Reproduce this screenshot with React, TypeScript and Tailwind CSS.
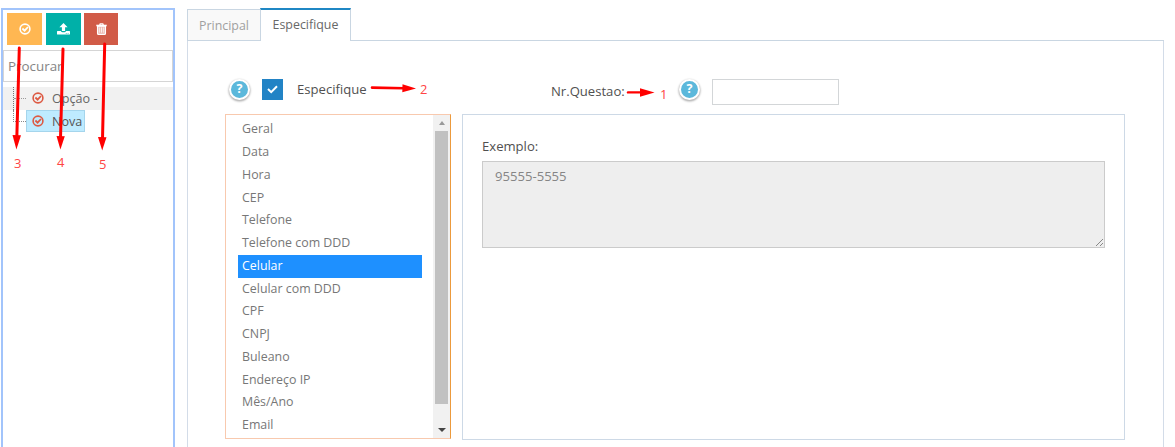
import React from 'react';

function CheckCircle({ size, className }: { size: number; className?: string }) {
  return (
    <svg width={size} height={size} viewBox="0 0 12 12" fill="none" stroke="currentColor" className={className}>
      <circle cx="6" cy="6" r="4.9" strokeWidth="1.6" />
      <path d="M3.4 5.5 L5.6 7.7 L9 4" strokeWidth="1.8" />
    </svg>
  );
}

function UploadIcon() {
  return (
    <svg width="13" height="12" viewBox="0 0 13 12" fill="currentColor">
      <path d="M6.5 0 L10.6 4.3 H8.1 V8 H4.9 V4.3 H2.4 Z" />
      <path fillRule="evenodd" d="M0.6 8 H4 C4.2 8.8 4.8 9.2 5.4 9.2 H7.6 C8.2 9.2 8.8 8.8 9 8 H12.4 Q13 8 13 8.6 V11 Q13 11.6 12.4 11.6 H0.6 Q0 11.6 0 11 V8.6 Q0 8 0.6 8 Z M8.8 10 V10.8 H9.6 V10 Z M10.7 10 V10.8 H11.5 V10 Z" />
    </svg>
  );
}

function TrashIcon() {
  return (
    <svg width="11" height="12" viewBox="0 0 11 12" fill="none" stroke="currentColor">
      <path d="M0.3 2.5 H10.7" strokeWidth="1.6" />
      <path d="M3.7 2.2 L4.2 0.9 H6.8 L7.3 2.2" strokeWidth="1.3" />
      <path d="M1.6 3 H9.4 V10.4 Q9.4 11.3 8.5 11.3 H2.5 Q1.6 11.3 1.6 10.4 Z" fill="currentColor" fillOpacity="0.55" strokeWidth="1.3" />
      <path d="M3.7 4.4 V9.7 M5.5 4.4 V9.7 M7.3 4.4 V9.7" strokeWidth="0.8" />
    </svg>
  );
}

function Help() {
  return (
    <span className="flex h-[21px] w-[21px] shrink-0 items-center justify-center rounded-full border-2 border-white bg-[#5bb8db] text-[12.5px] font-bold leading-none text-white shadow-[0_1px_2px_0.5px_rgba(0,0,0,0.3)]">
      ?
    </span>
  );
}

const options = [
  'Geral', 'Data', 'Hora', 'CEP', 'Telefone', 'Telefone com DDD', 'Celular', 'Celular com DDD',
  'CPF', 'CNPJ', 'Buleano', 'Endereço IP', 'Mês/Ano', 'Email',
];

function Sidebar() {
  return (
    <aside className="mt-2 ml-px h-[445px] w-[174px] shrink-0 border-2 border-[#a2c4fb]">
      <div className="flex pt-[3px] pl-1 text-white">
        <button className="mr-1 flex h-8 w-[35px] items-center justify-center bg-[#ffb752]"><CheckCircle size={12} /></button>
        <button className="mr-[3px] flex h-8 w-[35px] items-center justify-center bg-[#00b0a8]"><UploadIcon /></button>
        <button className="flex h-8 w-[34px] items-center justify-center bg-[#d15b47]"><TrashIcon /></button>
      </div>
      <div className="mt-[5px] flex h-8 items-center border border-[#d5d5d5] pl-1 text-[13.4px] text-[#858585]">
        <span>Procurar</span>
      </div>
      <div className="mt-[5px] flex h-[23px] items-center bg-[#f1f1f1]">
        <div className="ml-2.5 flex h-full w-[13px] flex-col border-l border-dotted border-[#777]">
          <div className="mt-[11px] border-t border-dotted border-[#999]" />
        </div>
        <div className="flex items-center pl-[6px] text-[#dd5a43]">
          <CheckCircle size={12} />
          <span className="ml-2 translate-y-px text-[12.6px] text-[#666]">Opção -</span>
        </div>
      </div>
      <div className="flex h-[22px]">
        <div className="ml-2.5 h-[12px] w-[13px] border-b border-l border-dotted border-[#888]" />
        <div className="flex h-[22px] w-[59px] items-center border border-[#a5d5ec] bg-[#beebff] pl-[5px] text-[#dd5a43]">
          <CheckCircle size={12} />
          <span className="ml-2 translate-y-px text-[12.6px] text-[#555]">Nova</span>
        </div>
      </div>
    </aside>
  );
}

function OptionList() {
  return (
    <div className="flex h-[325px] w-[226px] border border-[#f8c9ae] border-r-[#ec9a3c] bg-white">
      <div className="flex-1 pt-[3.25px] pr-[11px] pl-[12px]">
        {options.map((o) => (
          <div
            key={o}
            className={o === 'Celular'
              ? 'flex h-[22.75px] items-center bg-[#1e90ff] pl-[4px] text-[12.4px] text-white'
              : 'flex h-[22.75px] items-center pl-[4px] text-[12.4px] text-[#777]'}
          >
            {o}
          </div>
        ))}
      </div>
      <div className="flex w-[17px] flex-col items-center bg-[#f1f1f1]">
        <div className="flex h-4 items-center"><div className="border-x-[3.5px] border-b-4 border-x-transparent border-b-[#999]" /></div>
        <div className="h-[273px] w-[13px] bg-[#c1c1c1]" />
        <div className="mt-[24px] border-x-4 border-t-4 border-x-transparent border-t-[#444]" />
      </div>
    </div>
  );
}

function Main() {
  return (
    <main className="mt-2 ml-3 w-[977px] shrink-0">
      <div className="flex h-[33px]">
        <div className="mt-px flex h-8 w-[74px] items-center justify-center border border-[#c9d6e2] bg-[#f9f9f9] text-[12.4px] text-[#a0a0a0]"><span className="translate-y-px">Principal</span></div>
        <div className="-ml-px flex h-[33px] w-[91px] items-center justify-center border-x border-t-2 border-x-[#c9d6e2] border-t-[#1f87c4] text-[12.4px] text-[#686868]">Especifique</div>
        <div className="flex-1 border-b border-[#c9d6e2]" />
      </div>
      <div className="h-[450px] border-x border-[#d3dce8] pl-[37px]">
        <div className="flex h-[73px] items-center pt-[24px]">
          <div className="ml-1 w-[22px]"><Help /></div>
          <div className="ml-[11px] flex h-[21px] w-[21px] items-center justify-center bg-[#2283c5]">
            <svg width="11" height="9" viewBox="0 0 11 9" fill="none" stroke="white" strokeWidth="2"><path d="M1 4 L4.2 7.1 L10 1.2" /></svg>
          </div>
          <span className="ml-[14px] w-[254px] text-[13.1px] text-[#505050]">Especifique</span>
          <span className="w-[128px] translate-y-[2px] text-[13.1px] text-[#505050]">Nr.Questao:</span>
          <div className="w-[22px]"><Help /></div>
          <div className="ml-[11px] h-[26px] w-[127px] translate-y-[2px] border border-[#d3d6d8]" />
        </div>
        <div className="flex">
          <OptionList />
          <section className="ml-[11px] h-[326px] w-[663px] border border-[#cdd9e6] pt-[22px] pl-[19px]">
            <div className="h-[24px] text-[13.1px] leading-[18px] text-[#505050]">Exemplo:</div>
            <div className="flex h-[87px] w-[623px] items-end justify-between border border-[#cbcbcb] bg-[#eee]">
              <span className="self-start pt-[5px] pl-3 text-[13.1px] leading-[18px] text-[#858585]">95555-5555</span>
              <svg width="9" height="9" viewBox="0 0 9 9" stroke="#888" strokeWidth="1"><path d="M1 8 L8 1 M5 8 L8 5" /></svg>
            </div>
          </section>
        </div>
      </div>
    </main>
  );
}

function Annotations() {
  return (
    <div className="pointer-events-none absolute inset-0 text-[13px] leading-4 text-[#ff4545]">
      <svg width="1175" height="447" className="absolute inset-0" fill="#ff0000" stroke="#ff0000">
        <g strokeWidth="3" strokeLinecap="round">
          <path d="M19.3 48 L16.8 138" />
          <path d="M63 49 L60.5 138" />
          <path d="M104.7 44 L102.5 139" />
          <path d="M372 87.6 L404 88.3" strokeWidth="2.6" />
          <path d="M628 92.4 L642 92.4" strokeWidth="2.4" />
        </g>
        <g stroke="none">
          <path d="M12.5 135 L21 135.3 L16.4 149.5 Z" />
          <path d="M56.5 136 L64.8 136.2 L60.4 149.5 Z" />
          <path d="M98 137 L106.5 137.2 L102.2 150.5 Z" />
          <path d="M402.5 84.3 L416 88.6 L402.3 92.2 Z" />
          <path d="M640 88.3 L654.5 92.5 L640 96.7 Z" />
        </g>
      </svg>
      <span className="absolute top-[155px] left-[14px]">3</span>
      <span className="absolute top-[154px] left-[57px]">4</span>
      <span className="absolute top-[156px] left-[99px]">5</span>
      <span className="absolute top-[81px] left-[420px]">2</span>
      <span className="absolute top-[86px] left-[660px]">1</span>
    </div>
  );
}

export default function App() {
  return (
    <div className="relative flex h-[447px] w-[1175px] overflow-hidden bg-white font-['Open_Sans',sans-serif]">
      <Sidebar />
      <Main />
      <Annotations />
    </div>
  );
}
